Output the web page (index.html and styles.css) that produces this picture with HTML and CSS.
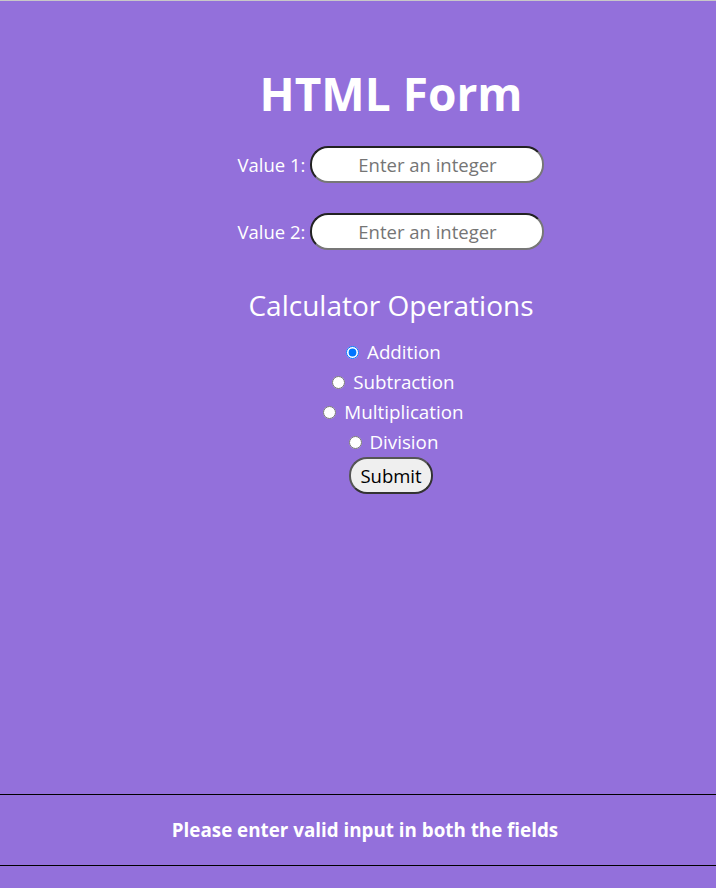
FILE: index.html
```html
<!DOCTYPE html>
<html lang="en">
<head>
<meta charset="utf-8">
<title>HTML Form</title>
<link rel="stylesheet" href="styles.css">
</head>
<body>
<main class="page">
  <h1 class="title">HTML Form</h1>
  <form class="form">
    <div class="row">
      <label class="label" for="v1">Value 1:</label>
      <input class="field" id="v1" type="text" placeholder="Enter an integer">
    </div>
    <div class="row">
      <label class="label" for="v2">Value 2:</label>
      <input class="field" id="v2" type="text" placeholder="Enter an integer">
    </div>
    <h2 class="ops-title">Calculator Operations</h2>
    <div class="ops">
      <label class="op"><input type="radio" name="op" checked> Addition</label>
      <label class="op"><input type="radio" name="op"> Subtraction</label>
      <label class="op"><input type="radio" name="op"> Multiplication</label>
      <label class="op"><input type="radio" name="op"> Division</label>
    </div>
    <button class="submit" type="button">Submit</button>
  </form>
</main>
<footer class="footer">
  <p class="message">Please enter valid input in both the fields</p>
</footer>
</body>
</html>
```
FILE: styles.css
```css
html, body {
  margin: 0;
  padding: 0;
}
body {
  background: #9370db;
  border-top: 1px solid #c8c8c8;
  font-family: "Open Sans", "Noto Sans", sans-serif;
  color: #ffffff;
  min-height: 887px;
  display: flex;
  flex-direction: column;
}
.page {
  padding-left: 66px;
  display: flex;
  flex-direction: column;
  align-items: center;
  flex: 1;
}
.title {
  margin: 60px 0 0;
  font-size: 46px;
  line-height: 64px;
  font-weight: 700;
}
.form {
  display: flex;
  flex-direction: column;
  align-items: center;
  margin-top: 21px;
}
.row {
  display: flex;
  align-items: center;
  margin-bottom: 30px;
}
.label {
  font-size: 18.5px;
  margin-right: 5px;
}
.field {
  box-sizing: border-box;
  width: 234px;
  height: 37px;
  border-radius: 18px;
  border: 2px solid;
  border-color: #222 #777 #777 #222;
  background: #fff;
  text-align: center;
  font-family: "Open Sans", sans-serif;
  font-size: 18.5px;
  padding: 0 8px;
}
.field::placeholder {
  color: #757575;
}
.ops-title {
  margin: 5px 0 0;
  font-size: 28px;
  font-weight: 400;
  line-height: 40px;
}
.ops {
  display: flex;
  flex-direction: column;
  align-items: center;
  margin-top: 12px;
}
.op {
  font-size: 18.8px;
  line-height: 30px;
}
.op input {
  width: 13px;
  height: 13px;
  margin: 0 3px 0 5px;
}
.submit {
  margin-top: 0;
  height: 37px;
  padding: 0 9px;
  border-radius: 18px;
  border: 2px solid;
  border-color: #555 #333 #333 #555;
  background: #efefef;
  color: #000;
  font-family: "Open Sans", sans-serif;
  font-size: 18.5px;
}
.footer {
  border-top: 1px solid #000;
  border-bottom: 1px solid #000;
  margin-bottom: 22px;
  padding-left: 14px;
  height: 70px;
  display: flex;
  align-items: center;
  justify-content: center;
}
.message {
  margin: 0;
  font-size: 18.8px;
  font-weight: 700;
}
```
